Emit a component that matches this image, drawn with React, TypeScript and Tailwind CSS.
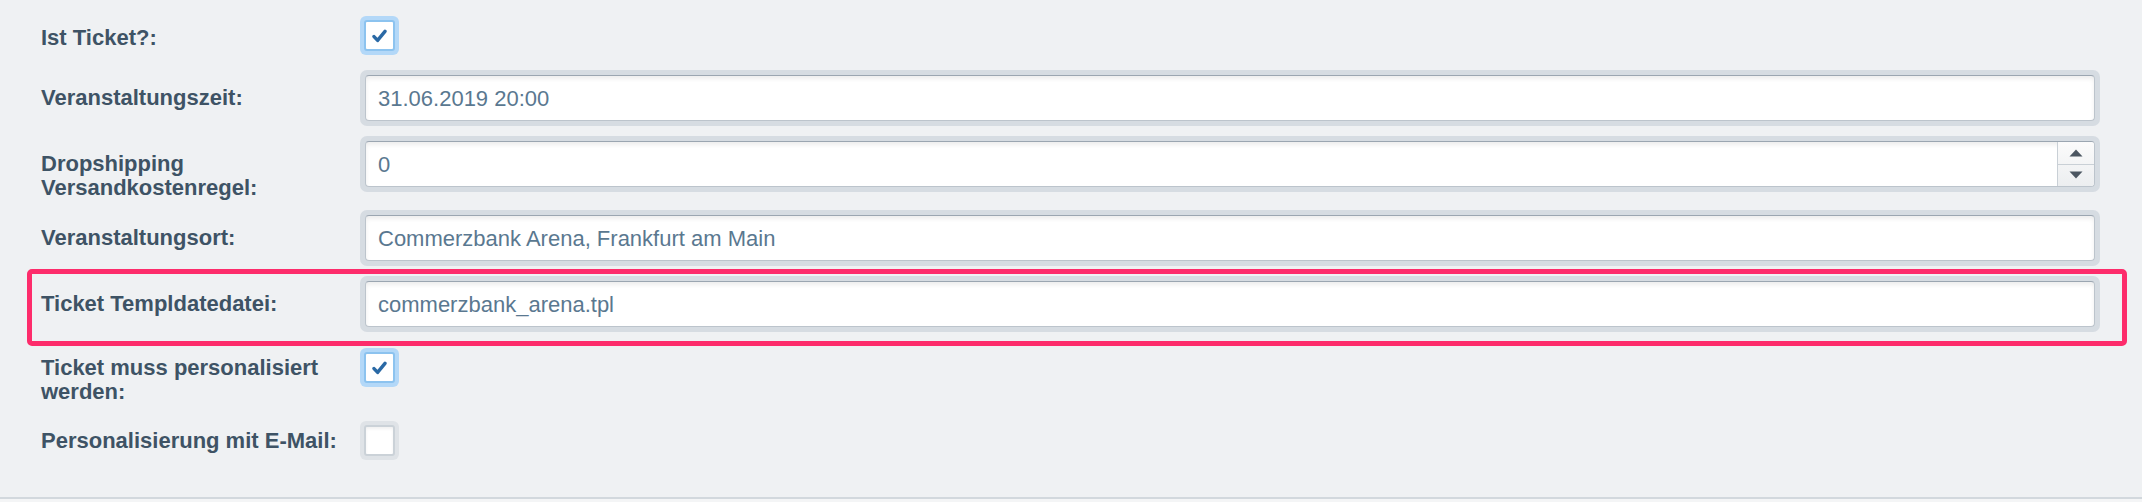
import React from "react";

const labelBase =
  "w-[360px] shrink-0 pl-[41px] pr-2 font-bold text-[22px] leading-[24px] text-[#3e5365]";

function CheckIcon() {
  return (
    <svg width="15" height="14" viewBox="0 0 15 14" aria-hidden="true">
      <path
        d="M2 7.6 L5.6 11.4 L13 2.4"
        fill="none"
        stroke="#2a69a5"
        strokeWidth="3.4"
        strokeLinecap="round"
        strokeLinejoin="round"
      />
    </svg>
  );
}

function Checkbox({ checked }: { checked: boolean }) {
  return (
    <div
      className={
        checked
          ? "h-[39px] w-[39px] shrink-0 rounded-[6px] bg-[#b3d8f8] p-[4px]"
          : "h-[39px] w-[39px] shrink-0 rounded-[6px] bg-[#dfe3e7] p-[4px]"
      }
    >
      <div
        className={
          checked
            ? "flex h-full w-full items-center justify-center rounded-[3px] border-2 border-[#8cc3ef] bg-white"
            : "flex h-full w-full items-center justify-center rounded-[3px] border-2 border-[#cbd2d8] bg-white shadow-[inset_0_2px_3px_rgba(0,0,0,0.06)]"
        }
      >
        {checked && <CheckIcon />}
      </div>
    </div>
  );
}

function TextField({ value, spinner }: { value: string; spinner?: boolean }) {
  return (
    <div className="flex-1 rounded-[7px] bg-[#d6dce2] p-[5px]">
      <div className="flex h-[46px] items-stretch overflow-hidden rounded-[4px] border border-[#bcc4cc] border-t-[#9ba6b1] bg-white shadow-[inset_0_3px_4px_rgba(0,0,0,0.07)]">
        <div className="flex flex-1 items-center pl-[12px] text-[22px] text-[#5a7890]">
          {value}
        </div>
        {spinner && (
          <div className="flex w-[37px] flex-col border-l border-[#c9d0d6] bg-gradient-to-b from-[#fbfbfb] to-[#eceef0]">
            <div className="flex flex-1 items-center justify-center border-b border-[#c9d0d6]">
              <svg width="14" height="8" viewBox="0 0 14 8" aria-hidden="true">
                <path d="M7 0.5 L13.5 7.5 L0.5 7.5 Z" fill="#4b5661" />
              </svg>
            </div>
            <div className="flex flex-1 items-center justify-center">
              <svg width="14" height="8" viewBox="0 0 14 8" aria-hidden="true">
                <path d="M0.5 0.5 L13.5 0.5 L7 7.5 Z" fill="#4b5661" />
              </svg>
            </div>
          </div>
        )}
      </div>
    </div>
  );
}

export default function App() {
  return (
    <div className="h-[502px] w-full overflow-hidden bg-[#eff1f3] font-['Liberation_Sans',Arial,sans-serif]">
      <div className="flex h-[497px] flex-col pr-[42px]">
        {/* Ist Ticket? */}
        <div className="mt-[16px] flex items-start">
          <div className={`${labelBase} pt-[10px]`}>Ist Ticket?:</div>
          <Checkbox checked />
        </div>

        {/* Veranstaltungszeit */}
        <div className="mt-[15px] flex items-start">
          <div className={`${labelBase} pt-[16px]`}>Veranstaltungszeit:</div>
          <TextField value="31.06.2019 20:00" />
        </div>

        {/* Dropshipping */}
        <div className="mt-[10px] flex items-start">
          <div className={`${labelBase} pt-[16px]`}>
            Dropshipping
            <br />
            Versandkostenregel:
          </div>
          <TextField value="0" spinner />
        </div>

        {/* Veranstaltungsort */}
        <div className="mt-[10px] flex items-start">
          <div className={`${labelBase} pt-[16px]`}>Veranstaltungsort:</div>
          <TextField value="Commerzbank Arena, Frankfurt am Main" />
        </div>

        {/* Ticket Templdatedatei, highlighted */}
        <div className="relative mt-[10px] flex items-start">
          <div className={`${labelBase} pt-[16px]`}>Ticket Templdatedatei:</div>
          <TextField value="commerzbank_arena.tpl" />
          <div className="pointer-events-none absolute -top-[7px] -bottom-[14px] left-[27px] -right-[27px] rounded-[5px] border-[5px] border-[#fd2c6b]" />
        </div>

        {/* Ticket muss personalisiert werden */}
        <div className="mt-[16px] flex items-start">
          <div className={`${labelBase} pt-[8px]`}>
            Ticket muss personalisiert
            <br />
            werden:
          </div>
          <Checkbox checked />
        </div>

        {/* Personalisierung mit E-Mail */}
        <div className="mt-[17px] flex items-start">
          <div className={`${labelBase} pt-[8px]`}>Personalisierung mit E-Mail:</div>
          <Checkbox checked={false} />
        </div>
      </div>
      <div className="h-[2px] bg-[#d2d8dd]" />
      <div className="h-[3px] bg-[#f4f5f6]" />
    </div>
  );
}
